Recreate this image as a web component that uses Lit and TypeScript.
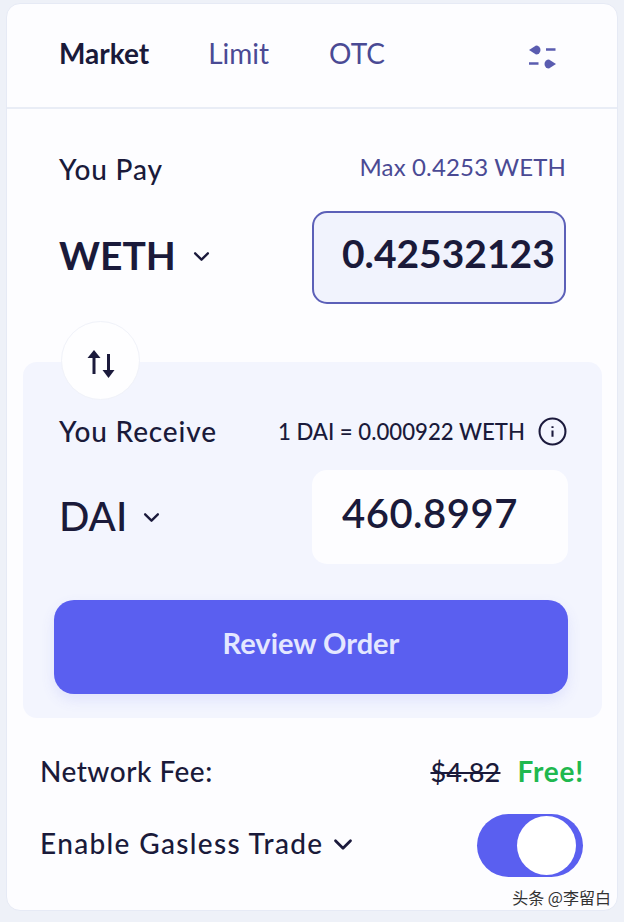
import { LitElement, html, css } from "lit";
import { customElement } from "lit/decorators.js";

const chevron = (cls: string) => html`<svg class=${cls} viewBox="0 0 16 10" fill="none" stroke="#1b1a3c" stroke-width="2.2" stroke-linecap="round" stroke-linejoin="round"><path d="M2 2l6 6 6-6"/></svg>`;

@customElement("app-root")
export class AppRoot extends LitElement {
  static styles = css`
    :host { display: block; width: 624px; height: 922px; box-sizing: border-box; padding: 3px 6px 11px 6px; background: #eef1f8; font-family: "Lato", "Noto Sans", sans-serif; color: #1a1a3a; overflow: hidden; }
    .card { height: 100%; box-sizing: border-box; background: #fdfdff; border: 1px solid #e6eaf5; border-radius: 14px; display: flex; flex-direction: column; position: relative; }
    .head { height: 105px; box-sizing: border-box; border-bottom: 2px solid #e9edf6; display: flex; align-items: center; padding: 0 61px 5px 52px; font-size: 28px; }
    .tab { color: #4a4a94; margin-right: 60px; }
    .tab.on { color: #1a1a3a; font-weight: 700; margin-right: 59px; }
    .sliders { margin-left: auto; width: 27px; height: 24px; margin-top: 7px; }
    .pay { height: 253px; box-sizing: border-box; padding: 43px 51px 0 52px; }
    .row { display: flex; justify-content: space-between; align-items: center; }
    .label { font-size: 28px; font-weight: 500; letter-spacing: .85px; }
    .max { font-size: 24px; color: #4a4a94; margin-top: -6px; letter-spacing: .15px; }
    .amounts { margin-top: 25px; }
    .coin { display: flex; align-items: center; font-size: 39px; font-weight: 700; padding-bottom: 5px; }
    .chev { width: 17px; height: 11px; margin-left: 17px; margin-top: 2px; }
    .box { width: 254px; height: 93px; box-sizing: border-box; border-radius: 15px; font-size: 39px; font-weight: 700; display: flex; align-items: center; padding-bottom: 10px; }
    .box.active { background: #f1f3fd; border: 2px solid #5c60b8; padding-left: 28px; }
    .swap { position: absolute; left: 54px; top: 317px; width: 79px; height: 79px; box-sizing: border-box; border-radius: 50%; background: #fefeff; border: 1px solid #f0f2f9; display: flex; align-items: center; justify-content: center; z-index: 1; padding: 4px 0 0 1px; }
    .swap svg { width: 30px; height: 30px; }
    .receive { margin: 0 15px 0 16px; height: 356px; box-sizing: border-box; background: #f3f5fe; border-radius: 14px; padding: 52px 35px 0 36px; }
    .rate { display: flex; align-items: center; font-size: 22.2px; font-weight: 500; gap: 13px; }
    .info { width: 29px; height: 29px; }
    .r2 { margin-top: 22px; }
    .coin.dai { font-weight: 500; font-size: 40px; padding-bottom: 2px; }
    .coin.dai .chev { margin-left: 16px; }
    .box.plain { background: #fdfdff; width: 256px; height: 94px; padding-left: 30px; padding-bottom: 8px; font-size: 40px; letter-spacing: .5px; font-weight: 600; margin-right: -1px; }
    .cta { margin: 36px -1px 0 -5px; height: 94px; box-sizing: border-box; padding-bottom: 10px; border-radius: 20px; background: #5a5ff0; color: #e4e7ff; font-size: 29px; font-weight: 700; display: flex; align-items: center; justify-content: center; box-shadow: 0 6px 14px rgba(90,95,240,.12); }
    .fee { padding: 0 34px 0 33px; }
    .fee .row { font-size: 28px; font-weight: 500; letter-spacing: .5px; }
    .f1 { margin-top: 36px; margin-right: -1px; }
    .strike { text-decoration: line-through; margin-right: 17px; letter-spacing: .2px; font-size: 27px; }
    .free { color: #1fb84f; font-weight: 700; letter-spacing: .8px; }
    .f2 { margin-top: 26px; }
    .gas { display: flex; align-items: center; letter-spacing: 1.35px; margin-top: -5px; }
    .gas .chev { width: 20px; height: 13px; margin-left: 9px; }
    .toggle { width: 106px; height: 63px; border-radius: 32px; background: #5a5ff0; display: flex; justify-content: flex-end; align-items: center; padding-right: 7px; box-sizing: border-box; }
    .knob { width: 59px; height: 59px; border-radius: 50%; background: #fff; }
    .mark { position: absolute; right: 6px; bottom: 1px; font-family: "Noto Sans CJK SC", sans-serif; font-size: 16px; color: #333; }
  `;

  render() {
    return html`<div class="card">
      <div class="head">
        <span class="tab on">Market</span><span class="tab">Limit</span><span class="tab">OTC</span>
        <svg class="sliders" viewBox="0 0 27 24" fill="#5a5cb0" stroke="#5a5cb0"><path stroke="none" d="M0 5L7 .5a4.500 4.500 0 1 1 0 9z"/><path stroke="none" d="M27 19L20 14.500a4.500 4.500 0 1 0 0 9z"/><path stroke-width="2.600" d="M17 4.500h9.500M0 18.500h9.500"/></svg>
      </div>
      <div class="pay">
        <div class="row"><span class="label">You Pay</span><span class="max">Max 0.4253 WETH</span></div>
        <div class="row amounts"><span class="coin">WETH${chevron("chev")}</span><div class="box active">0.42532123</div></div>
      </div>
      <div class="swap"><svg viewBox="0 0 30 30" fill="#1b1a3c" stroke="#1b1a3c"><path stroke="none" d="M8 2l6.500 8H1.500z"/><path stroke-width="3" d="M8 9v17M22.500 6v17"/><path stroke="none" d="M22.500 30l6-8H16.500z"/></svg></div>
      <div class="receive">
        <div class="row"><span class="label">You Receive</span><span class="rate">1 DAI = 0.000922 WETH
          <svg class="info" viewBox="0 0 28 28" fill="none" stroke="#1b1a3c" stroke-width="2"><circle cx="14" cy="14" r="12.500"/><path d="M14 9v1.500M14 13v6"/></svg></span></div>
        <div class="row r2"><span class="coin dai">DAI${chevron("chev")}</span><div class="box plain">460.8997</div></div>
        <div class="cta">Review Order</div>
      </div>
      <div class="fee">
        <div class="row f1"><span>Network Fee:</span><span><span class="strike">$4.82</span><span class="free">Free!</span></span></div>
        <div class="row f2"><span class="gas">Enable Gasless Trade${chevron("chev")}</span><div class="toggle"><div class="knob"></div></div></div>
      </div>
      <div class="mark">头条 @李留白</div>
    </div>`;
  }
}
